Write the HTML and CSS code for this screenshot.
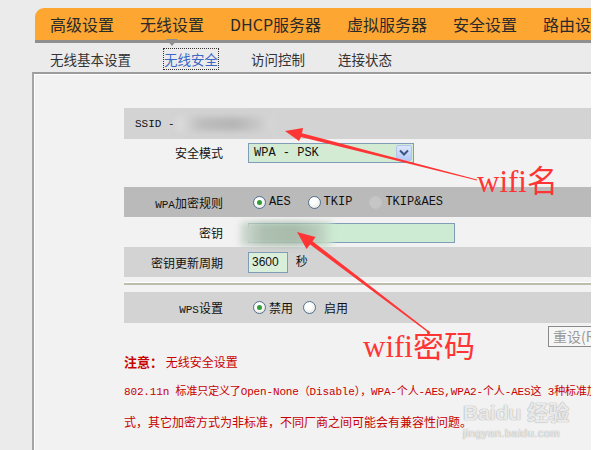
FILE: index.html
```html
<!DOCTYPE html>
<html lang="zh-CN">
<head>
    <meta charset="UTF-8">
    <title>无线安全设置</title>
    <link rel="stylesheet" href="styles.css">
</head>
<body>

    <div class="page">
        <div class="topnav">
            <span class="nav-item">高级设置</span>
            <span class="nav-item active">无线设置</span>
            <span class="nav-item">DHCP服务器</span>
            <span class="nav-item">虚拟服务器</span>
            <span class="nav-item">安全设置</span>
            <span class="nav-item">路由设置</span>
        </div>

        <div class="subnav">
            <span class="sub-item">无线基本设置</span>
            <span class="sub-item current">无线安全</span>
            <span class="sub-item">访问控制</span>
            <span class="sub-item">连接状态</span>
        </div>

        <div class="panel">
            <div class="ssid-row">
                <span class="mono">SSID -</span>
                <span class="blur blur-ssid"></span>
            </div>

            <div class="form-row mode-row">
                <div class="label">安全模式</div>
                <div class="value">
                    <div class="select">
                        <span class="mono">WPA - PSK</span>
                        <span class="select-btn">
                            <svg width="10" height="8" viewBox="0 0 10 8"><path d="M1 1.5 L5 5.5 L9 1.5" fill="none" stroke="#3d5583" stroke-width="2"/></svg>
                        </span>
                    </div>
                </div>
            </div>

            <div class="form-row dark">
                <div class="label"><span class="mono">WPA</span>加密规则</div>
                <div class="value options">
                    <label class="opt"><span class="radio on"></span><span class="mono">AES</span></label>
                    <label class="opt"><span class="radio"></span><span class="mono">TKIP</span></label>
                    <label class="opt"><span class="radio off"></span><span class="mono">TKIP&amp;AES</span></label>
                </div>
            </div>

            <div class="form-row">
                <div class="label">密钥</div>
                <div class="value">
                    <div class="key-input">
                        <span class="blur blur-key"></span>
                    </div>
                </div>
            </div>

            <div class="form-row gray">
                <div class="label">密钥更新周期</div>
                <div class="value">
                    <span class="small-input">3600</span>
                    <span class="unit">秒</span>
                </div>
            </div>

            <div class="divider"></div>

            <div class="form-row gray wps-row">
                <div class="label"><span class="mono">WPS</span>设置</div>
                <div class="value options tight">
                    <label class="opt"><span class="radio on"></span><span>禁用</span></label>
                    <label class="opt"><span class="radio"></span><span class="gap-text">启用</span></label>
                </div>
            </div>

            <div class="button-row">
                <button class="reset-btn">重设(R)</button>
            </div>

            <div class="notes">
                <p><b>注意：</b> 无线安全设置</p>
                <p class="mixed">802.11n 标准只定义了Open-None（Disable），WPA-个人-AES,WPA2-个人-AES这 3种标准加密方</p>
                <p>式，其它加密方式为非标准，不同厂商之间可能会有兼容性问题。</p>
            </div>
        </div>

        <svg class="marks" width="602" height="450" viewBox="0 0 602 450">
            <polygon points="285,131 303,128 302,133.3 477,179.5 477,180.5 301,137.1 299,141" fill="#ff3535"/>
            <polygon points="297,232 315.5,237 312.5,241.3 430.4,332.5 429.6,333.5 310.1,244.5 306.5,249" fill="#ff3535"/>
        </svg>
        <div class="mark-text wifi-name">wifi名</div>
        <div class="mark-text wifi-pass">wifi密码</div>

        <div class="watermark">
            <div class="wm-logo">Baidu 经验</div>
            <div class="wm-url">jingyan.baidu.com</div>
        </div>
    </div>

</body>
</html>
```

FILE: styles.css
```css
* {
    margin: 0;
    padding: 0;
    box-sizing: border-box;
}
body {
    font-family: 'Noto Sans CJK SC', sans-serif;
    background-color: #fff;
}
.mono {
    font-family: 'Liberation Mono', 'Noto Sans CJK SC', monospace;
}
.page {
    position: relative;
    width: 591px;
    height: 450px;
    overflow: hidden;
    background-color: #ebebeb;
}
.topnav {
    display: flex;
    align-items: center;
    gap: 26px;
    height: 35px;
    margin: 8px 0 0 35px;
    padding-left: 15px;
    background-color: #fda632;
    border-top-left-radius: 9px;
    border-bottom: 3px solid #8f8f8f;
    white-space: nowrap;
    font-size: 16px;
    color: #2a2a2a;
}
.nav-item {
    position: relative;
}
.nav-item.active::after {
    content: '';
    position: absolute;
    left: 26px;
    top: 27px;
    border-left: 6px solid transparent;
    border-right: 6px solid transparent;
    border-top: 7px solid #8f8f8f;
}
.subnav {
    display: flex;
    align-items: center;
    gap: 33px;
    height: 29px;
    padding: 3px 0 0 50px;
    font-size: 13.5px;
    color: #333;
}
.sub-item.current {
    color: #3a66c4;
    outline: 1px dotted #333;
}
.panel {
    height: 378px;
    margin-left: 32px;
    padding: 34px 0 0 90px;
    background-color: #f2f2f2;
    border-left: 2px solid #a5a5a5;
    border-top: 2px solid #9c9c9c;
    box-shadow: inset 1px 1px 0 #fff;
    font-size: 12px;
    color: #111;
}
.ssid-row {
    display: flex;
    align-items: center;
    height: 31px;
    padding-left: 11px;
    background-color: #d3d3d3;
    font-size: 11px;
}
.blur {
    display: inline-block;
    filter: blur(3px);
}
.blur-ssid {
    width: 96px;
    height: 14px;
    margin-left: 2px;
    background: linear-gradient(90deg, #e0e0e0 0%, #bdbdbd 25%, #b5b5b5 60%, #c8c8c8 85%, #dadada 100%);
}
.form-row {
    display: grid;
    grid-template-columns: 99px 1fr;
    column-gap: 25px;
    align-items: center;
    height: 30px;
}
.form-row .label {
    text-align: right;
    white-space: nowrap;
}
.form-row .label .mono {
    font-size: 11px;
}
.mode-row {
    height: 48px;
    align-items: start;
    padding-top: 4px;
    line-height: 20px;
}
.dark {
    background-color: #bababa;
}
.gray {
    background-color: #d3d3d3;
}
.wps-row {
    height: 31px;
}
.select {
    display: flex;
    align-items: center;
    justify-content: space-between;
    width: 166px;
    height: 20px;
    padding: 0 1px 0 5px;
    background-color: #d2ebd2;
    border: 1px solid #7f9db9;
    font-size: 12px;
}
.select-btn {
    display: flex;
    align-items: center;
    justify-content: center;
    width: 16px;
    height: 16px;
    background: linear-gradient(#dbe6fd, #b5c9f6);
    border: 1px solid #b3c5ee;
    border-radius: 2px;
}
.options {
    display: flex;
    align-items: center;
    gap: 17px;
    padding-left: 5px;
}
.options.tight {
    gap: 10px;
}
.opt {
    display: flex;
    align-items: center;
    gap: 3px;
    white-space: nowrap;
}
.opt .mono {
    font-size: 12px;
}
.gap-text {
    margin-left: 5px;
}
.radio {
    position: relative;
    width: 13px;
    height: 13px;
    border-radius: 50%;
    border: 1px solid #54708e;
    background: radial-gradient(circle at 40% 35%, #fff 30%, #dcdcd6 100%);
}
.radio.on::after {
    content: '';
    position: absolute;
    left: 3px;
    top: 3px;
    width: 5px;
    height: 5px;
    border-radius: 50%;
    background-color: #2e9e35;
}
.radio.off {
    border-color: #c4c4c4;
    background: #c6c6c6;
}
.key-input {
    position: relative;
    width: 207px;
    height: 20px;
    margin-top: 1px;
    background-color: #cdebd3;
    border: 1px solid #7f9db9;
}
.blur-key {
    position: absolute;
    left: -9px;
    top: -2px;
    width: 92px;
    height: 24px;
    background: linear-gradient(90deg, #d4ddd6 0%, #aec0b1 25%, #a9bcab 60%, #b9cdbc 85%, #cde7d2 100%);
}
.small-input {
    display: inline-block;
    width: 40px;
    height: 21px;
    padding-left: 3px;
    line-height: 19px;
    background-color: #d9efd9;
    border: 1px solid #7f9db9;
    font-family: 'Liberation Sans', sans-serif;
    font-size: 12px;
}
.unit {
    margin-left: 5px;
}
.divider {
    margin: 6px 0 7px;
    border-top: 2px solid #bdbdae;
    box-shadow: 0 -1px 0 #fff;
}
.button-row {
    height: 21px;
    margin-top: 3px;
    padding-left: 424px;
    white-space: nowrap;
}
.reset-btn {
    width: 62px;
    height: 21px;
    padding-left: 4px;
    text-align: left;
    font-family: 'Noto Sans CJK SC', sans-serif;
    font-size: 14px;
    line-height: 17px;
    color: #9a9a9a;
    background-color: #f6f6f6;
    border: 1px solid #8a8a8a;
}
.notes {
    color: #c80000;
    white-space: nowrap;
}
.notes p {
    height: 30px;
    line-height: 30px;
    font-size: 12px;
}
.notes b {
    font-size: 13px;
}
.notes .mixed {
    font-family: 'Liberation Mono', 'Noto Sans CJK SC', monospace;
    font-size: 11px;
    letter-spacing: -0.15px;
}
.marks {
    position: absolute;
    left: 0;
    top: 0;
}
.mark-text {
    position: absolute;
    font-family: 'Liberation Serif', 'Noto Sans CJK SC', serif;
    font-size: 31px;
    line-height: 1;
    color: #ff3535;
}
.wifi-name {
    left: 477px;
    top: 166px;
}
.wifi-pass {
    left: 363px;
    top: 331px;
}
.watermark {
    position: absolute;
    left: 463px;
    top: 401px;
    color: rgba(255, 255, 255, 0.75);
    text-shadow: 0 0 1px #aaa, 0 0 1px #aaa;
    font-family: 'Liberation Sans', 'Noto Sans CJK SC', sans-serif;
}
.wm-logo {
    font-size: 21px;
    font-weight: bold;
    line-height: 24px;
}
.wm-url {
    margin-top: 2px;
    font-size: 11px;
    line-height: 13px;
    letter-spacing: 0.5px;
    color: rgba(255, 255, 255, 0.8);
}
```
